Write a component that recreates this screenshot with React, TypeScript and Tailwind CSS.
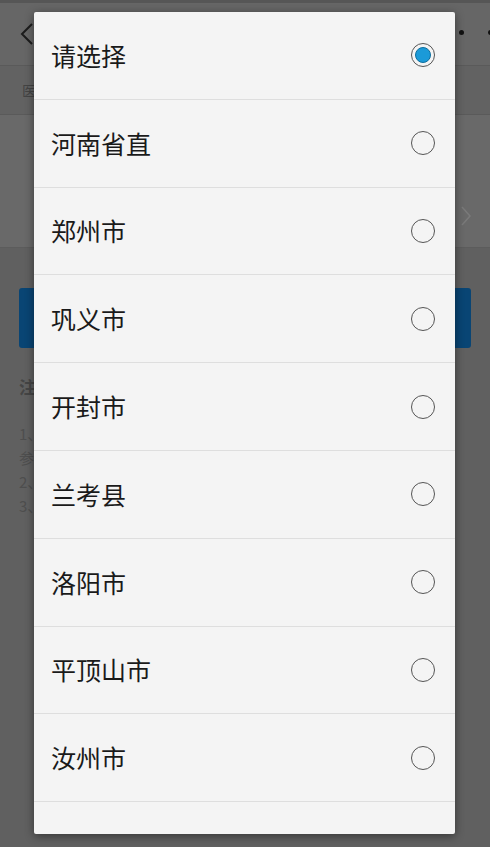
import React from "react";

const options = [
  "请选择",
  "河南省直",
  "郑州市",
  "巩义市",
  "开封市",
  "兰考县",
  "洛阳市",
  "平顶山市",
  "汝州市",
];

function Radio({ checked }: { checked: boolean }) {
  return (
    <div className="w-[24px] h-[24px] rounded-full border border-[#555] flex items-center justify-center">
      {checked && (
        <div className="w-[16px] h-[16px] rounded-full bg-[#1b9ad8] border border-[#0e6f9e]" />
      )}
    </div>
  );
}

export default function App() {
  const selected = 0;
  return (
    <div
      className="relative w-[490px] h-[847px] overflow-hidden bg-[#606060]"
      style={{ fontFamily: '"Noto Sans CJK SC", "Noto Sans", sans-serif' }}
    >
      {/* dimmed page behind */}
      <div className="h-[3px] bg-[#565656]" />
      <div className="h-[63px] bg-[#666666] border-b border-[#5a5a5a] flex items-center justify-between pl-[20px]">
        <svg width="14" height="24" viewBox="0 0 14 24" fill="none">
          <path d="M12 2 L2 12 L12 22" stroke="#1c1c1c" strokeWidth="2" />
        </svg>
        <div className="flex gap-[24px] translate-x-[3px] -translate-y-[2px]">
          <span className="w-[5px] h-[5px] rounded-full bg-[#111]" />
          <span className="w-[5px] h-[5px] rounded-full bg-[#111]" />
        </div>
      </div>
      <div className="h-[49px] bg-[#626262] border-b border-[#5a5a5a] flex items-center px-[22px] text-[14px] text-[#444]">
        医疗保险
      </div>
      <div className="h-[133px] bg-[#696969] border-b border-[#5c5c5c] flex items-end justify-end pb-[20px] pr-[18px]">
        <svg width="12" height="22" viewBox="0 0 12 22" fill="none">
          <path d="M2 2 L10 11 L2 20" stroke="#7a7a7a" strokeWidth="1.5" />
        </svg>
      </div>
      <div className="px-[19px] pt-[40px]">
        <div className="h-[60px] rounded-[3px] bg-[#094574]" />
        <div className="pt-[26px] text-[17px] font-bold text-[#454545]">注意事项</div>
        <div className="pt-[22px] text-[15px] leading-[24px] text-[#4e4e4e]">
          <p>1、请选择参保地区</p>
          <p>参保人员</p>
          <p>2、请核对信息</p>
          <p>3、提交查询</p>
        </div>
      </div>

      {/* dialog */}
      <div className="absolute left-[34px] top-[12px] w-[421px] h-[822px] bg-[#f4f4f4] rounded-[2px] shadow-[0_2px_10px_rgba(0,0,0,0.45)] overflow-hidden">
        {options.map((o, i) => (
          <div
            key={o}
            className="h-[87.8px] border-b border-[#dedede] flex items-center justify-between pl-[17px] pr-[20px]"
          >
            <span className="text-[25px] leading-none text-[#1a1a1a]">{o}</span>
            <Radio checked={i === selected} />
          </div>
        ))}
        <div className="h-[87.8px] flex items-center justify-end pr-[20px]">
          <Radio checked={false} />
        </div>
      </div>
    </div>
  );
}
